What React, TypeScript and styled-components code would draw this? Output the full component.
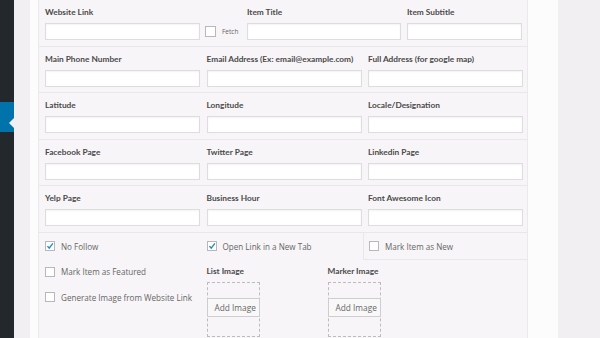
import React from "react";
import styled, { createGlobalStyle } from "styled-components";

const GlobalStyle = createGlobalStyle`
  html, body {
    margin: 0;
    padding: 0;
    background: #f1eff1;
    font-family: Lato, "Open Sans", sans-serif;
  }
`;

interface IField {
  label: string;
}

const fieldRows: IField[][] = [
  [
    { label: "Main Phone Number" },
    { label: "Email Address (Ex: email@example.com)" },
    { label: "Full Address (for google map)" },
  ],
  [{ label: "Latitude" }, { label: "Longitude" }, { label: "Locale/Designation" }],
  [{ label: "Facebook Page" }, { label: "Twitter Page" }, { label: "Linkedin Page" }],
  [{ label: "Yelp Page" }, { label: "Business Hour" }, { label: "Font Awesome Icon" }],
];

const Check = ({ checked, size }: { checked?: boolean; size?: number }) => (
  <CheckBox $size={size || 10}>
    {checked && (
      <svg width="10" height="10" viewBox="0 0 10 10">
        <path d="M1.8 5.2 L4 7.6 L8.6 1.8" fill="none" stroke="#1e8cbe" strokeWidth="1.7" />
      </svg>
    )}
  </CheckBox>
);

const ImageUpload = ({ label }: IField) => (
  <ImageBlock>
    <SmallLabel>{label}</SmallLabel>
    <DashedBox>
      <AddButton>Add Image</AddButton>
    </DashedBox>
  </ImageBlock>
);

const App = (): JSX.Element => {
  return (
    <>
      <GlobalStyle />
      <Page>
        <Sidebar>
          <ActiveItem />
        </Sidebar>
        <Gutter />
        <Panel>
          <Inner>
            <FirstRow>
              <Cell $width={155}>
                <Label>Website Link</Label>
                <Input />
              </Cell>
              <FetchCell>
                <Check size={11} />
                <FetchText>Fetch</FetchText>
              </FetchCell>
              <Cell $width={154}>
                <Label>Item Title</Label>
                <Input />
              </Cell>
              <Cell $width={115}>
                <Label>Item Subtitle</Label>
                <Input />
              </Cell>
            </FirstRow>
            {fieldRows.map((row, i) => (
              <FieldRow key={i}>
                {row.map((f) => (
                  <Cell key={f.label}>
                    <Label>{f.label}</Label>
                    <Input />
                  </Cell>
                ))}
              </FieldRow>
            ))}
            <OptionsSection>
              <Column>
                <CheckLine>
                  <Check checked />
                  <CheckText>No Follow</CheckText>
                </CheckLine>
                <CheckLine>
                  <Check />
                  <CheckText>Mark Item as Featured</CheckText>
                </CheckLine>
                <CheckLine>
                  <Check />
                  <CheckText>Generate Image from Website Link</CheckText>
                </CheckLine>
              </Column>
              <Column>
                <CheckLine>
                  <Check checked />
                  <CheckText>Open Link in a New Tab</CheckText>
                </CheckLine>
                <ImagesRow>
                  <ImageUpload label="List Image" />
                  <ImageUpload label="Marker Image" />
                </ImagesRow>
              </Column>
              <Column>
                <BorderedLine>
                  <Check />
                  <CheckText>Mark Item as New</CheckText>
                </BorderedLine>
              </Column>
            </OptionsSection>
          </Inner>
        </Panel>
      </Page>
    </>
  );
};

const Page = styled.div`
  display: flex;
  height: 338px;
  width: 600px;
  overflow: hidden;
`;

const Sidebar = styled.div`
  width: 14px;
  flex-shrink: 0;
  background-color: #23282d;
  padding-top: 102px;
  box-sizing: border-box;
`;

const ActiveItem = styled.div`
  position: relative;
  height: 30px;
  background-color: #0073aa;

  &::after {
    content: "";
    position: absolute;
    right: 0;
    top: 16px;
    border-top: 5px solid transparent;
    border-bottom: 5px solid transparent;
    border-right: 5px solid #f1eff1;
  }
`;

const Gutter = styled.div`
  width: 16px;
  flex-shrink: 0;
`;

const Panel = styled.div`
  width: 528px;
  flex-shrink: 0;
  background-color: #fdfcfd;
  padding: 0 30px 0 8px;
  box-sizing: border-box;
`;

const Inner = styled.div`
  height: 100%;
  background-color: #f7f5f7;
  border-left: 1px solid #ebe9eb;
  border-right: 1px solid #ebe9eb;
  padding-left: 6px;
`;

const FieldRow = styled.div`
  display: grid;
  grid-template-columns: 155px 155px 155px;
  column-gap: 6.5px;
  height: 46.5px;
  box-sizing: border-box;
  padding-top: 7px;
  border-bottom: 1px solid #e9e7e9;
  margin-left: -6px;
  padding-left: 6px;
`;

const FirstRow = styled(FieldRow)`
  display: flex;
  column-gap: 6px;
`;

const Cell = styled.div<{ $width?: number }>`
  display: flex;
  flex-direction: column;
  width: ${(p) => (p.$width ? `${p.$width}px` : "auto")};
  flex-shrink: 0;
`;

const FetchCell = styled.div`
  display: flex;
  align-items: center;
  width: 36px;
  margin-left: -1px;
  margin-top: 16px;
  height: 17px;
`;

const FetchText = styled.span`
  font-family: "Open Sans", sans-serif;
  font-size: 6.5px;
  color: #666;
  margin-left: 6px;
`;

const Label = styled.div`
  font-size: 8.3px;
  line-height: 10px;
  font-weight: bold;
  color: #4a4a4a;
  margin-bottom: 6px;
  white-space: nowrap;
`;

const Input = styled.div`
  height: 17px;
  box-sizing: border-box;
  border: 1px solid #dedcde;
  background-color: #ffffff;
  box-shadow: inset 0 1px 2px rgba(0, 0, 0, 0.05);
`;

const OptionsSection = styled.div`
  display: grid;
  grid-template-columns: 155px 155px 155px;
  column-gap: 6.5px;
  padding-top: 1px;
`;

const Column = styled.div`
  display: flex;
  flex-direction: column;
`;

const CheckLine = styled.div`
  display: flex;
  align-items: center;
  height: 25.5px;
`;

const BorderedLine = styled(CheckLine)`
  margin-left: -5px;
  padding-left: 5px;
  margin-right: -4px;
  border-left: 1px solid #e9e7e9;
  border-bottom: 1px solid #e9e7e9;
  margin-top: -1px;
  padding-top: 1px;
`;

const CheckBox = styled.span<{ $size: number }>`
  display: inline-flex;
  align-items: center;
  justify-content: center;
  width: ${(p) => p.$size}px;
  height: ${(p) => p.$size}px;
  box-sizing: border-box;
  border: 1px solid #b9b7bb;
  background-color: #ffffff;
  flex-shrink: 0;
  svg {
    margin-top: -1px;
  }
`;

const CheckText = styled.span`
  font-family: "Open Sans", sans-serif;
  font-size: 8.1px;
  color: #666;
  margin-left: 6px;
  white-space: nowrap;
`;

const ImagesRow = styled.div`
  display: flex;
  padding-top: 6px;
`;

const ImageBlock = styled.div`
  width: 121px;
  flex-shrink: 0;
  display: flex;
  flex-direction: column;
`;

const SmallLabel = styled(Label)`
  line-height: 12px;
  margin-bottom: 5px;
`;

const DashedBox = styled.div`
  width: 53px;
  height: 55px;
  box-sizing: border-box;
  border: 1px dashed #bdbbbd;
  padding-top: 15px;
`;

const AddButton = styled.div`
  margin: 0 -1px;
  height: 19px;
  box-sizing: border-box;
  border: 1px solid #cfcdcf;
  background-color: #f9f8f9;
  font-family: "Open Sans", sans-serif;
  font-size: 8.3px;
  line-height: 17px;
  color: #666;
  padding-left: 7px;
  white-space: nowrap;
`;

export default App;
